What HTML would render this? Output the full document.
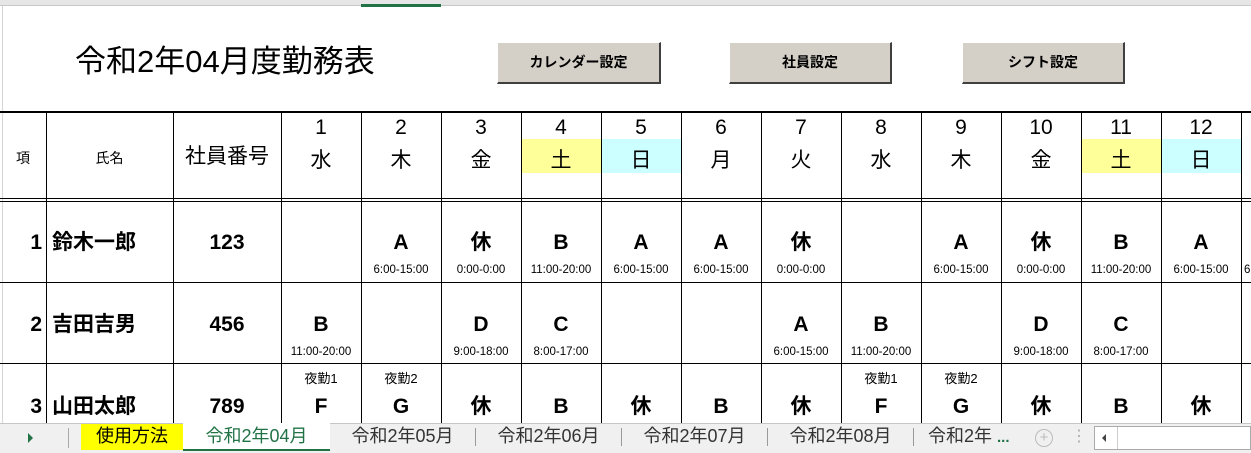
<!DOCTYPE html><html><head><meta charset="utf-8"><style>
*{margin:0;padding:0;box-sizing:border-box}
body{width:1251px;height:453px;overflow:hidden;background:#fff;position:relative;font-family:"Liberation Sans","Noto Sans CJK JP",sans-serif;color:#000}
.a{position:absolute}
.v{position:absolute;width:1px;background:#000}
.h{position:absolute;height:1px;background:#000}
.t{position:absolute;text-align:center;white-space:nowrap}
.btn{position:absolute;top:42px;height:42px;background:#d4d0c8;border-right:2px solid #404040;border-bottom:2px solid #404040;border-top:1px solid #fff;border-left:1px solid #fff;font-size:14px;font-weight:bold;text-align:center;line-height:39px}
.big{font-size:21px;font-weight:bold;line-height:26px;height:26px}
.sm{font-size:11.5px}
.hd{font-size:21px;line-height:33px}
.n{font-size:21px;font-weight:bold;line-height:26px}
</style></head><body>
<div class="a" style="left:0;top:0;width:1251px;height:6px;background:#e6e6e6;border-bottom:1px solid #c8c8c8"></div>
<div class="a" style="left:361px;top:4px;width:80px;height:3px;background:#217346"></div>
<div class="a" style="left:2px;top:6px;width:1px;height:417px;background:#d4d4d4"></div>
<div class="t" style="left:75px;top:42px;font-size:31px;line-height:40px">令和2年04月度勤務表</div>
<div class="btn" style="left:497px;width:164px">カレンダー設定</div>
<div class="btn" style="left:729px;width:163px">社員設定</div>
<div class="btn" style="left:962px;width:163px">シフト設定</div>
<div class="a" style="left:522px;top:139px;width:79px;height:34px;background:#ffff99"></div>
<div class="a" style="left:602px;top:139px;width:79px;height:34px;background:#ccffff"></div>
<div class="a" style="left:1082px;top:139px;width:79px;height:34px;background:#ffff99"></div>
<div class="a" style="left:1162px;top:139px;width:79px;height:34px;background:#ccffff"></div>
<div class="h" style="left:0;top:111px;width:1251px;height:2px"></div>
<div class="h" style="left:0;top:198px;width:1251px"></div>
<div class="h" style="left:0;top:201px;width:1251px"></div>
<div class="h" style="left:0;top:282px;width:1251px"></div>
<div class="h" style="left:0;top:363px;width:1251px"></div>
<div class="v" style="left:46px;top:111px;height:312px"></div>
<div class="v" style="left:173px;top:111px;height:312px"></div>
<div class="v" style="left:281px;top:111px;height:312px"></div>
<div class="v" style="left:361px;top:111px;height:312px"></div>
<div class="v" style="left:441px;top:111px;height:312px"></div>
<div class="v" style="left:521px;top:111px;height:312px"></div>
<div class="v" style="left:601px;top:111px;height:312px"></div>
<div class="v" style="left:681px;top:111px;height:312px"></div>
<div class="v" style="left:761px;top:111px;height:312px"></div>
<div class="v" style="left:841px;top:111px;height:312px"></div>
<div class="v" style="left:921px;top:111px;height:312px"></div>
<div class="v" style="left:1001px;top:111px;height:312px"></div>
<div class="v" style="left:1081px;top:111px;height:312px"></div>
<div class="v" style="left:1161px;top:111px;height:312px"></div>
<div class="v" style="left:1241px;top:111px;height:312px"></div>
<div class="t" style="left:0;width:46px;top:148px;font-size:14px">項</div>
<div class="t" style="left:46px;width:127px;top:148px;font-size:14px">氏名</div>
<div class="t" style="left:173px;width:108px;top:142px;font-size:21px;line-height:30px">社員番号</div>
<div class="t hd" style="left:281px;width:80px;top:111px">1<br>水</div>
<div class="t hd" style="left:361px;width:80px;top:111px">2<br>木</div>
<div class="t hd" style="left:441px;width:80px;top:111px">3<br>金</div>
<div class="t hd" style="left:521px;width:80px;top:111px">4<br>土</div>
<div class="t hd" style="left:601px;width:80px;top:111px">5<br>日</div>
<div class="t hd" style="left:681px;width:80px;top:111px">6<br>月</div>
<div class="t hd" style="left:761px;width:80px;top:111px">7<br>火</div>
<div class="t hd" style="left:841px;width:80px;top:111px">8<br>水</div>
<div class="t hd" style="left:921px;width:80px;top:111px">9<br>木</div>
<div class="t hd" style="left:1001px;width:80px;top:111px">10<br>金</div>
<div class="t hd" style="left:1081px;width:80px;top:111px">11<br>土</div>
<div class="t hd" style="left:1161px;width:80px;top:111px">12<br>日</div>
<!-- row 1 -->
<div class="t n" style="left:0;width:42px;text-align:right;top:230px">1</div>
<div class="t big" style="left:52px;top:230px">鈴木一郎</div>
<div class="t big" style="left:173px;width:108px;top:230px">123</div>
<div class="t big" style="left:361px;width:80px;top:230px">A</div><div class="t sm" style="left:361px;width:80px;top:264px">6:00-15:00</div>
<div class="t big" style="left:441px;width:80px;top:230px">休</div><div class="t sm" style="left:441px;width:80px;top:264px">0:00-0:00</div>
<div class="t big" style="left:521px;width:80px;top:230px">B</div><div class="t sm" style="left:521px;width:80px;top:264px">11:00-20:00</div>
<div class="t big" style="left:601px;width:80px;top:230px">A</div><div class="t sm" style="left:601px;width:80px;top:264px">6:00-15:00</div>
<div class="t big" style="left:681px;width:80px;top:230px">A</div><div class="t sm" style="left:681px;width:80px;top:264px">6:00-15:00</div>
<div class="t big" style="left:761px;width:80px;top:230px">休</div><div class="t sm" style="left:761px;width:80px;top:264px">0:00-0:00</div>
<div class="t big" style="left:921px;width:80px;top:230px">A</div><div class="t sm" style="left:921px;width:80px;top:264px">6:00-15:00</div>
<div class="t big" style="left:1001px;width:80px;top:230px">休</div><div class="t sm" style="left:1001px;width:80px;top:264px">0:00-0:00</div>
<div class="t big" style="left:1081px;width:80px;top:230px">B</div><div class="t sm" style="left:1081px;width:80px;top:264px">11:00-20:00</div>
<div class="t big" style="left:1161px;width:80px;top:230px">A</div><div class="t sm" style="left:1161px;width:80px;top:264px">6:00-15:00</div>
<div class="t sm" style="left:1244px;top:264px">6</div>
<!-- row 2 -->
<div class="t n" style="left:0;width:42px;text-align:right;top:312px">2</div>
<div class="t big" style="left:52px;top:312px">吉田吉男</div>
<div class="t big" style="left:173px;width:108px;top:312px">456</div>
<div class="t big" style="left:281px;width:80px;top:312px">B</div><div class="t sm" style="left:281px;width:80px;top:346px">11:00-20:00</div>
<div class="t big" style="left:441px;width:80px;top:312px">D</div><div class="t sm" style="left:441px;width:80px;top:346px">9:00-18:00</div>
<div class="t big" style="left:521px;width:80px;top:312px">C</div><div class="t sm" style="left:521px;width:80px;top:346px">8:00-17:00</div>
<div class="t big" style="left:761px;width:80px;top:312px">A</div><div class="t sm" style="left:761px;width:80px;top:346px">6:00-15:00</div>
<div class="t big" style="left:841px;width:80px;top:312px">B</div><div class="t sm" style="left:841px;width:80px;top:346px">11:00-20:00</div>
<div class="t big" style="left:1001px;width:80px;top:312px">D</div><div class="t sm" style="left:1001px;width:80px;top:346px">9:00-18:00</div>
<div class="t big" style="left:1081px;width:80px;top:312px">C</div><div class="t sm" style="left:1081px;width:80px;top:346px">8:00-17:00</div>
<!-- row 3 -->
<div class="t n" style="left:0;width:42px;text-align:right;top:394px">3</div>
<div class="t big" style="left:52px;top:394px">山田太郎</div>
<div class="t big" style="left:173px;width:108px;top:394px">789</div>
<div class="t" style="left:281px;width:80px;top:368px;font-size:13px">夜勤1</div><div class="t big" style="left:281px;width:80px;top:394px">F</div>
<div class="t" style="left:361px;width:80px;top:368px;font-size:13px">夜勤2</div><div class="t big" style="left:361px;width:80px;top:394px">G</div>
<div class="t big" style="left:441px;width:80px;top:394px">休</div>
<div class="t big" style="left:521px;width:80px;top:394px">B</div>
<div class="t big" style="left:601px;width:80px;top:394px">休</div>
<div class="t big" style="left:681px;width:80px;top:394px">B</div>
<div class="t big" style="left:761px;width:80px;top:394px">休</div>
<div class="t" style="left:841px;width:80px;top:368px;font-size:13px">夜勤1</div><div class="t big" style="left:841px;width:80px;top:394px">F</div>
<div class="t" style="left:921px;width:80px;top:368px;font-size:13px">夜勤2</div><div class="t big" style="left:921px;width:80px;top:394px">G</div>
<div class="t big" style="left:1001px;width:80px;top:394px">休</div>
<div class="t big" style="left:1081px;width:80px;top:394px">B</div>
<div class="t big" style="left:1161px;width:80px;top:394px">休</div>
<!-- tab bar -->
<div class="a" style="left:0;top:423px;width:1251px;height:30px;background:#f0f0f0;border-top:1px solid #c6c6c6"></div>
<div class="a" style="left:28px;top:433px;width:0;height:0;border-top:5px solid transparent;border-bottom:5px solid transparent;border-left:5px solid #217346"></div>
<div class="a" style="left:68px;top:428px;width:1px;height:20px;background:#aaa"></div>
<div class="t" style="left:81px;top:424px;width:102px;height:26px;background:#ffff00;font-size:18px;line-height:25px">使用方法</div>
<div class="t" style="left:183px;top:423px;width:147px;height:28px;background:#fff;color:#217346;font-size:18px;line-height:26px;border-bottom:2px solid #217346">令和2年04月</div>
<div class="t" style="left:330px;top:424px;width:145px;font-size:18px;line-height:25px;color:#333">令和2年05月</div>
<div class="a" style="left:475px;top:428px;width:1px;height:18px;background:#999"></div>
<div class="t" style="left:476px;top:424px;width:145px;font-size:18px;line-height:25px;color:#333">令和2年06月</div>
<div class="a" style="left:621px;top:428px;width:1px;height:18px;background:#999"></div>
<div class="t" style="left:622px;top:424px;width:145px;font-size:18px;line-height:25px;color:#333">令和2年07月</div>
<div class="a" style="left:767px;top:428px;width:1px;height:18px;background:#999"></div>
<div class="t" style="left:768px;top:424px;width:145px;font-size:18px;line-height:25px;color:#333">令和2年08月</div>
<div class="a" style="left:913px;top:428px;width:1px;height:18px;background:#999"></div>
<div class="t" style="left:928px;top:424px;font-size:18px;line-height:25px;color:#333">令和2年 <span style="color:#217346;font-weight:bold;font-size:15px">...</span></div>
<div class="t" style="left:1035px;top:429px;width:18px;height:18px;border:1px solid #bbb;border-radius:50%;color:#bbb;font-size:15px;line-height:15px">+</div>
<div class="t" style="left:1071px;top:426px;color:#aaa;font-size:16px">⋮</div>
<div class="a" style="left:1094px;top:426px;width:157px;height:24px;background:#fff;border:1px solid #aaa"></div>
<div class="a" style="left:1117px;top:427px;width:1px;height:22px;background:#ccc"></div>
<div class="a" style="left:1102px;top:434px;width:0;height:0;border-top:4px solid transparent;border-bottom:4px solid transparent;border-right:4px solid #444"></div>
</body></html>
